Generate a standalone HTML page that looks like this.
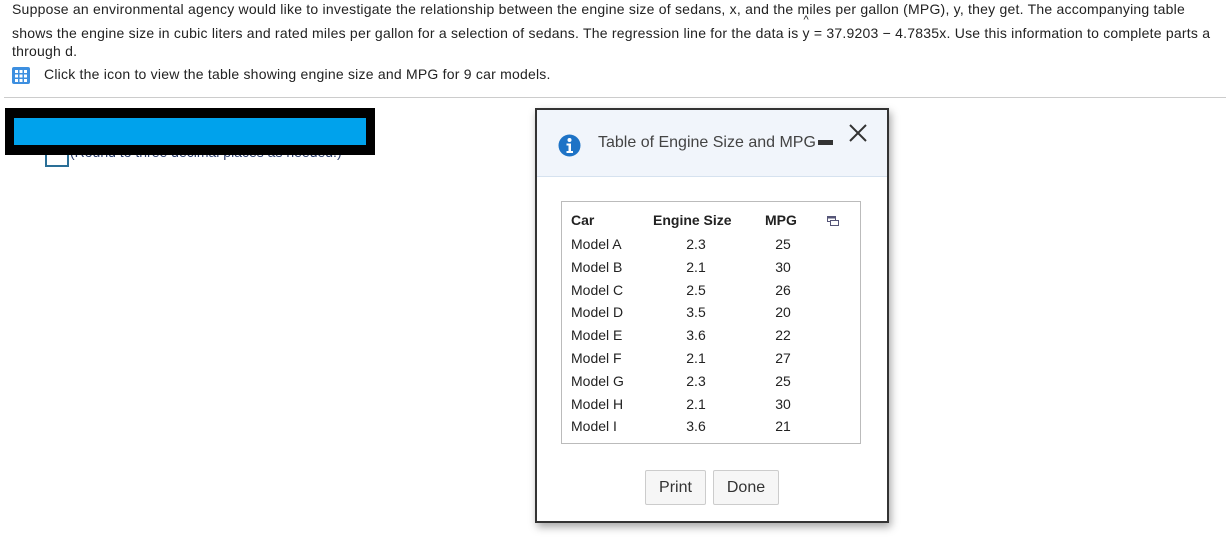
<!DOCTYPE html>
<html><head><style>
body{margin:0;width:1232px;height:545px;background:#fff;font-family:"Liberation Sans",Arial,sans-serif;position:relative;overflow:hidden;color:#222}
.t{position:absolute;font-size:14px;white-space:nowrap;letter-spacing:0.22px}
.dlg{position:absolute;left:535px;top:108px;width:350px;height:411px;border:2px solid #333;background:#fff;box-shadow:2px 4px 8px rgba(0,0,0,.35)}
.hd{position:absolute;left:0;top:0;width:350px;height:66px;background:#f1f5fb;border-bottom:1px solid #d6e2ef}
.tb{position:absolute;left:24px;top:91px;width:298px;height:241px;border:1px solid #bbb}
.c{position:absolute;font-size:14px;color:#222}
.btn{position:absolute;top:360px;height:33px;border:1px solid #ccc;border-radius:2px;background:#f6f6f6;font-size:16px;color:#333;line-height:33px;text-align:center}
</style></head><body>
<div class="t" style="left:12px;top:1px">Suppose an environmental agency would like to investigate the relationship between the engine size of sedans, x, and the miles per gallon (MPG), y, they get. The accompanying table</div>
<div class="t" style="left:12px;top:25px">shows the engine size in cubic liters and rated miles per gallon for a selection of sedans. The regression line for the data is <span style="position:relative">y<span style="position:absolute;left:1px;top:-11px;font-size:11px">^</span></span> = 37.9203 − 4.7835x. Use this information to complete parts a</div>
<div class="t" style="left:12px;top:43px">through d.</div>
<svg style="position:absolute;left:12px;top:67px" width="18" height="17"><rect x="0" y="0" width="18" height="17" rx="2" fill="#3d8fe0"/><g fill="#fff"><rect x="3" y="3" width="3" height="3"/><rect x="7.5" y="3" width="3" height="3"/><rect x="12" y="3" width="3" height="3"/><rect x="3" y="7.5" width="3" height="3"/><rect x="7.5" y="7.5" width="3" height="3"/><rect x="12" y="7.5" width="3" height="3"/><rect x="3" y="12" width="3" height="3"/><rect x="7.5" y="12" width="3" height="3"/><rect x="12" y="12" width="3" height="3"/></g></svg>
<div class="t" style="left:44px;top:66px">Click the icon to view the table showing engine size and MPG for 9 car models.</div>
<div style="position:absolute;left:4px;top:97px;width:1222px;height:1px;background:#ccc"></div>
<div style="position:absolute;left:45px;top:145px;width:20px;height:18px;border:2px solid #2a6f97;background:#fff"></div>
<div class="t" style="left:70px;top:144px;color:#2b3d6b;letter-spacing:0">(Round to three decimal places as needed.)</div>
<div style="position:absolute;left:5px;top:108px;width:370px;height:47px;background:#000"></div>
<div style="position:absolute;left:14px;top:118px;width:352px;height:27px;background:#00a2ec"></div>
<div class="dlg">
<div class="hd">
<svg style="position:absolute;left:21px;top:24px" width="23" height="23"><circle cx="11.5" cy="11.5" r="11" fill="#1e73c6"/><circle cx="11.5" cy="6" r="2" fill="#fff"/><path d="M8.5 9.5h4.5v7.5h2v2h-6.5v-2h2v-5.5h-2z" fill="#fff"/></svg>
<div class="c" style="left:61px;top:24px;font-size:16px;color:#444">Table of Engine Size and MPG</div>
<div style="position:absolute;left:281px;top:30px;width:15px;height:5px;background:#333"></div>
<svg style="position:absolute;left:312px;top:14px" width="18" height="18"><path d="M1 1L17 17M17 1L1 17" stroke="#333" stroke-width="2"/></svg>
</div>
<div class="tb">
<div class="c" style="left:9px;top:10px;font-weight:bold">Car</div>
<div class="c" style="left:91px;top:10px;font-weight:bold">Engine Size</div>
<div class="c" style="left:203px;top:10px;font-weight:bold">MPG</div>
<svg style="position:absolute;left:265px;top:14px" width="12" height="10"><rect x="0.5" y="0.5" width="8" height="5" fill="#fff" stroke="#557"/><rect x="0.5" y="0.5" width="8" height="2" fill="#557"/><rect x="3.5" y="4.5" width="8" height="5" fill="#fff" stroke="#557"/></svg>
<div class="c" style="left:9px;top:31px;line-height:22.8px">Model A<br>Model B<br>Model C<br>Model D<br>Model E<br>Model F<br>Model G<br>Model H<br>Model I</div>
<div class="c" style="top:31px;line-height:22.8px;width:40px;text-align:center;left:114px">2.3<br>2.1<br>2.5<br>3.5<br>3.6<br>2.1<br>2.3<br>2.1<br>3.6</div>
<div class="c" style="left:201px;top:31px;line-height:22.8px;width:40px;text-align:center">25<br>30<br>26<br>20<br>22<br>27<br>25<br>30<br>21</div>
</div>
<div class="btn" style="left:108px;width:59px">Print</div>
<div class="btn" style="left:176px;width:64px">Done</div>
</div>
</body></html>
